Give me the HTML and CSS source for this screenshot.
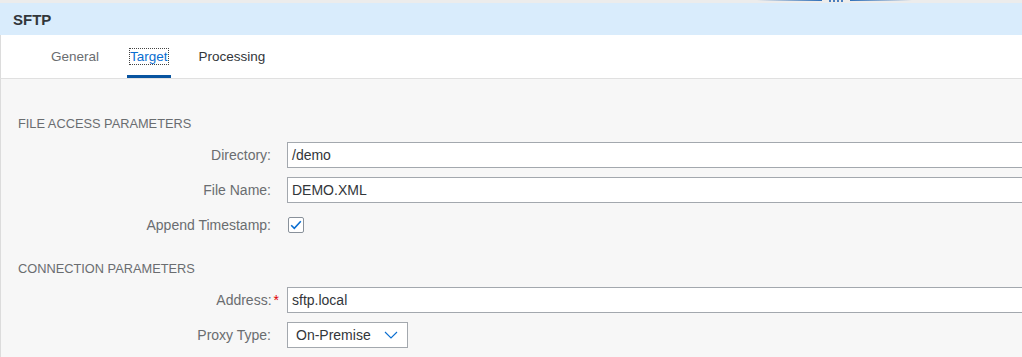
FILE: index.html
```html
<!DOCTYPE html>
<html lang="en">
<head>
<meta charset="utf-8">
<title>SFTP</title>
<link rel="stylesheet" href="styles.css">
</head>
<body>
<div class="topstrip">
  <span class="deco-line deco-left"></span>
  <span class="deco-dots"><i></i><i></i><i></i><i></i></span>
  <span class="deco-line deco-right"></span>
</div>
<header class="header">SFTP</header>
<nav class="tabs">
  <div class="tab tab-muted">General</div>
  <div class="tab tab-active"><span class="focus">Target</span></div>
  <div class="tab">Processing</div>
</nav>
<main class="content">
  <section class="group">
    <h2 class="group-title">FILE ACCESS PARAMETERS</h2>
    <div class="row">
      <label class="label">Directory:</label>
      <div class="input wide">/demo</div>
    </div>
    <div class="row">
      <label class="label">File Name:</label>
      <div class="input wide">DEMO.XML</div>
    </div>
    <div class="row">
      <label class="label">Append Timestamp:</label>
      <div class="checkbox">
        <svg width="12" height="10" viewBox="0 0 12 10"><path d="M1.2 5.2 L4.3 8.3 L10.8 1.3" fill="none" stroke="#0a6ed1" stroke-width="1.6"/></svg>
      </div>
    </div>
  </section>
  <section class="group group-second">
    <h2 class="group-title">CONNECTION PARAMETERS</h2>
    <div class="row">
      <label class="label">Address:<span class="req">*</span></label>
      <div class="input wide">sftp.local</div>
    </div>
    <div class="row">
      <label class="label">Proxy Type:</label>
      <div class="input select">
        <span>On-Premise</span>
        <svg width="14" height="8" viewBox="0 0 14 8"><path d="M1 1 L7 7 L13 1" fill="none" stroke="#0a6ed1" stroke-width="1.1"/></svg>
      </div>
    </div>
  </section>
</main>
</body>
</html>
```
FILE: styles.css
```css
html, body {
  margin: 0;
  padding: 0;
}
body {
  width: 1022px;
  height: 357px;
  overflow: hidden;
  background: #f7f7f7;
  font-family: "Liberation Sans", Arial, sans-serif;
  color: #32363a;
}
.topstrip {
  height: 3px;
  background: #ececec;
  display: flex;
  align-items: flex-start;
  padding-left: 757px;
}
.deco-line {
  display: block;
  height: 1px;
}
.deco-left {
  width: 65px;
  background: linear-gradient(to right, rgba(10,110,209,0), #2f6fb8);
}
.deco-right {
  width: 62px;
  background: linear-gradient(to right, #2f6fb8, rgba(10,110,209,0));
}
.deco-dots {
  display: flex;
  gap: 2px;
  margin: 0 7px;
}
.deco-dots i {
  display: block;
  width: 2px;
  height: 2px;
  background: #4a7fbf;
}
.header {
  height: 32px;
  line-height: 33px;
  background: #d9ecfc;
  padding-left: 13px;
  font-weight: bold;
  font-size: 15px;
  color: #32363a;
}
.tabs {
  height: 43px;
  background: #ffffff;
  border-left: 1px solid #dcdcdc;
  border-bottom: 1px solid #e0e0e0;
  display: flex;
  gap: 25px;
  padding-left: 47px;
}
.tab {
  padding: 0 3px;
  font-size: 13.5px;
  line-height: 43px;
  height: 40px;
  color: #32363a;
  border-bottom: 3px solid transparent;
}
.tab-muted {
  color: #6a6d70;
}
.tab-active {
  color: #0a6ed1;
  border-bottom-color: #0854a0;
}
.focus {
  outline: 1px dotted #444;
  outline-offset: 0;
}
.content {
  border-left: 1px solid #dcdcdc;
  padding-top: 34px;
  height: 244px;
}
.group-title {
  margin: 0 0 9px 17px;
  font-size: 12.8px;
  font-weight: normal;
  line-height: 21px;
  height: 20px;
  color: #6a6d70;
}
.group-second {
  margin-top: 20px;
}
.row {
  display: grid;
  grid-template-columns: 270px 1fr;
  column-gap: 16px;
  align-items: center;
  height: 26px;
  margin-bottom: 9px;
}
.label {
  text-align: right;
  font-size: 14px;
  color: #6a6d70;
}
.req {
  color: #e00000;
  margin-left: 2px;
  margin-right: -8px;
}
.input {
  box-sizing: border-box;
  height: 26px;
  background: #ffffff;
  border: 1px solid #a3a8ae;
  font-size: 14px;
  line-height: 24px;
  padding-left: 4px;
  color: #32363a;
}
.wide {
  border-right: 0;
}
.select {
  width: 121px;
  display: flex;
  align-items: center;
  justify-content: space-between;
  padding: 0 9px 0 8px;
}
.checkbox {
  box-sizing: border-box;
  width: 16px;
  height: 16px;
  margin-left: 1px;
  border: 1px solid #89919a;
  border-radius: 2px;
  background: #ffffff;
  display: flex;
  align-items: center;
  justify-content: center;
}
```
